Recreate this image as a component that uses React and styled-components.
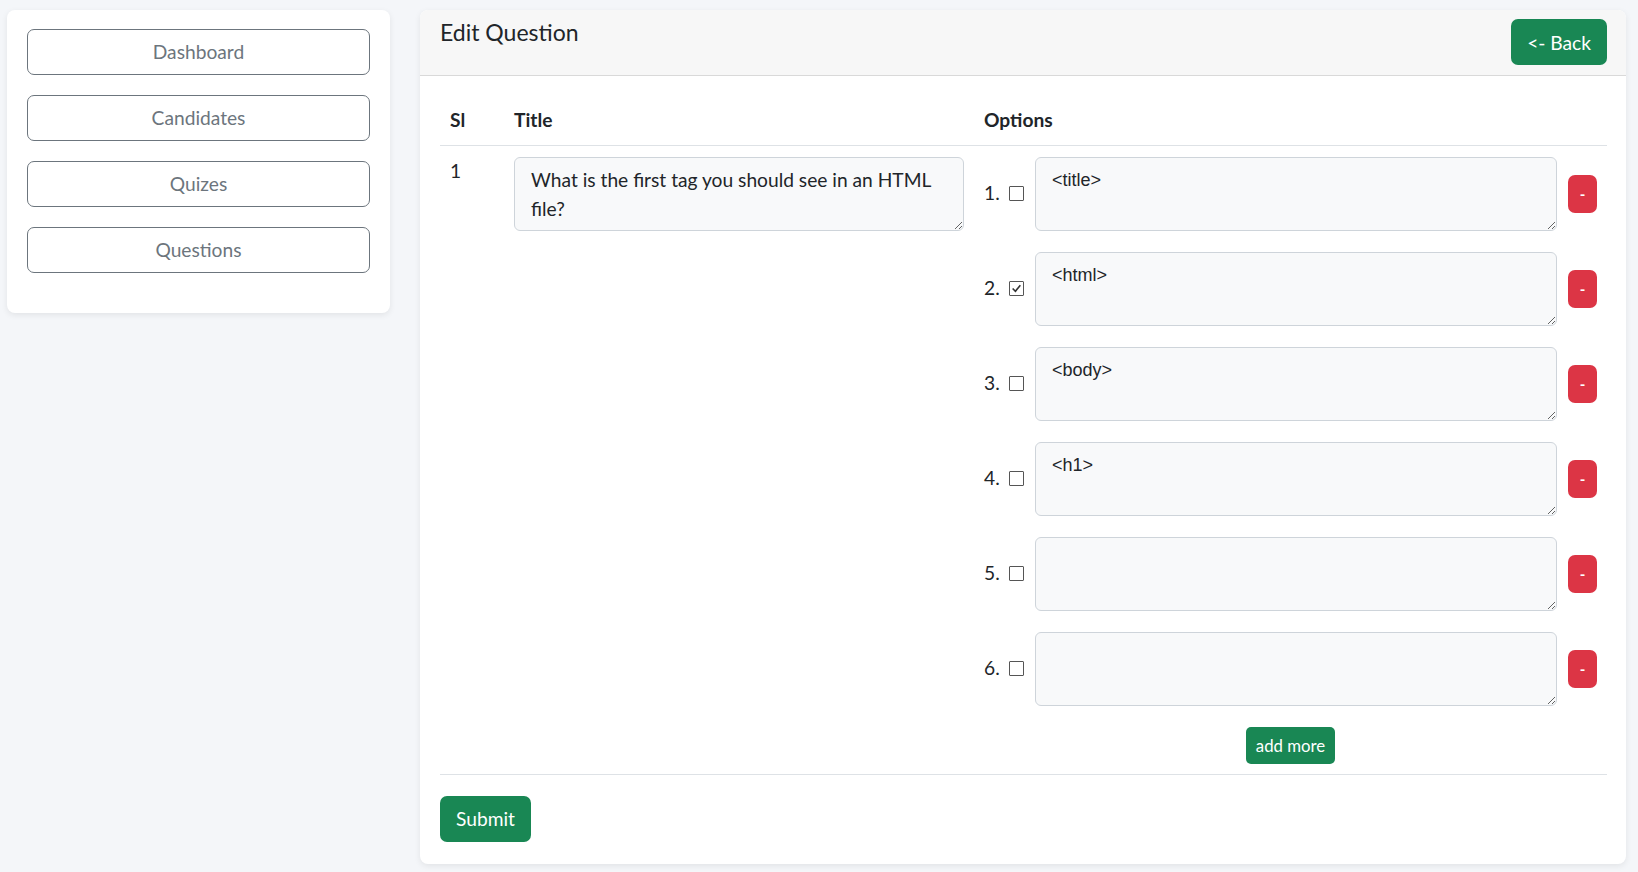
import React from "react";
import styled, { createGlobalStyle } from "styled-components";

const Global = createGlobalStyle`
  html, body { margin: 0; padding: 0; }
  body {
    background: #f4f6f9;
    font-family: Lato, "Noto Sans", sans-serif;
    font-size: 19.2px;
    color: #212529;
  }
  * { box-sizing: border-box; }
`;

const Page = styled.div`
  display: flex;
  align-items: flex-start;
  gap: 30px;
  padding: 10px 12px 9px 7px;
`;

const Sidebar = styled.nav`
  width: 383px;
  flex: none;
  background: #fff;
  border-radius: 8px;
  box-shadow: 0 2px 6px rgba(0, 0, 0, 0.08);
  padding: 19px 20px 40px;
  display: flex;
  flex-direction: column;
  gap: 20px;
`;

const NavButton = styled.button`
  height: 46px;
  background: #fff;
  border: 1px solid #6c757d;
  border-radius: 7px;
  color: #6c757d;
  font-family: inherit;
  font-size: 19.2px;
  padding: 0 0 2px;
  cursor: pointer;
`;

const Card = styled.main`
  flex: 1;
  background: #fff;
  border-radius: 8px;
  box-shadow: 0 2px 6px rgba(0, 0, 0, 0.08);
  overflow: hidden;
`;

const CardHeader = styled.header`
  height: 66px;
  background: #f7f7f7;
  border-bottom: 1px solid #d9d9d9;
  padding: 9px 19px 0 20px;
  display: flex;
  justify-content: space-between;
  align-items: flex-start;
`;

const Heading = styled.h5`
  margin: 0;
  font-size: 23px;
  font-weight: 400;
  line-height: 1.2;
  padding-top: 0;
`;

const Button = styled.button`
  background: ${(p) => (p.$variant === "danger" ? "#dc3545" : "#198754")};
  color: #fff;
  border: none;
  border-radius: ${(p) => (p.$small ? "5px" : "7px")};
  font-family: inherit;
  font-size: ${(p) => (p.$small ? "16.8px" : "19.2px")};
  height: ${(p) => (p.$small ? "37px" : "46px")};
  padding: 0 ${(p) => (p.$small ? "10px" : "16px")};
  cursor: pointer;
`;

const RemoveButton = styled(Button)`
  width: 29px;
  height: 38px;
  padding: 0;
  font-size: 15px;
  font-weight: 700;
  flex: none;
`;

const CardBody = styled.div`
  padding: 20px 19px 22px 20px;
`;

const Table = styled.div`
  display: grid;
  grid-template-columns: 64px 470px 1fr;
`;

const HeadCell = styled.div`
  padding: 10px 10px 10px;
  font-weight: 700;
  line-height: 28.8px;
  border-bottom: 1px solid #dee2e6;
`;

const Cell = styled.div`
  padding: 11px 10px 10px;
  line-height: 28.8px;
  border-bottom: 1px solid #dee2e6;
`;

const TextArea = styled.textarea`
  display: block;
  width: 100%;
  height: 74px;
  resize: vertical;
  background: #f8f9fa;
  border: 1px solid #ced4da;
  border-radius: 6px;
  padding: 8px 16px 6px;
  color: #212529;
  font-family: ${(p) => (p.$plain ? '"Liberation Sans", Arial, sans-serif' : "inherit")};
  font-size: ${(p) => (p.$plain ? "18px" : "19.2px")};
  line-height: 28.8px;
  outline: none;
`;

const OptionList = styled.div`
  display: flex;
  flex-direction: column;
  gap: 21px;
`;

const OptionRow = styled.div`
  display: flex;
  align-items: center;
`;

const OptionLabel = styled.span`
  width: 25px;
  flex: none;
`;

const Check = styled.span`
  width: 15px;
  height: 15px;
  flex: none;
  border: 1px solid #555;
  border-radius: 1px;
  background: #fff;
  display: flex;
  align-items: center;
  justify-content: center;
  margin-right: 11px;
`;

const OptionField = styled.div`
  flex: 1;
  margin-right: 11px;
`;

const AddRow = styled.div`
  display: flex;
  justify-content: center;
  padding-top: 21px;
`;

const Footer = styled.div`
  padding-top: 21px;
`;

const options = [
  { text: "<title>", checked: false },
  { text: "<html>", checked: true },
  { text: "<body>", checked: false },
  { text: "<h1>", checked: false },
  { text: "", checked: false },
  { text: "", checked: false },
];

export default function App() {
  return (
    <>
      <Global />
      <Page>
        <Sidebar>
          {["Dashboard", "Candidates", "Quizes", "Questions"].map((n) => (
            <NavButton key={n}>{n}</NavButton>
          ))}
        </Sidebar>
        <Card>
          <CardHeader>
            <Heading>Edit Question</Heading>
            <Button>&lt;- Back</Button>
          </CardHeader>
          <CardBody>
            <Table>
              <HeadCell>Sl</HeadCell>
              <HeadCell>Title</HeadCell>
              <HeadCell>Options</HeadCell>
              <Cell>1</Cell>
              <Cell>
                <TextArea defaultValue="What is the first tag you should see in an HTML file?" />
              </Cell>
              <Cell>
                <OptionList>
                  {options.map((o, i) => (
                    <OptionRow key={i}>
                      <OptionLabel>{i + 1}.</OptionLabel>
                      <Check>
                        {o.checked && (
                          <svg width="11" height="11" viewBox="0 0 10 10">
                            <path d="M1.5 5 L4 7.5 L8.5 2" fill="none" stroke="#333" strokeWidth="1.5" />
                          </svg>
                        )}
                      </Check>
                      <OptionField>
                        <TextArea $plain defaultValue={o.text} />
                      </OptionField>
                      <RemoveButton $variant="danger">-</RemoveButton>
                    </OptionRow>
                  ))}
                </OptionList>
                <AddRow>
                  <Button $small>add more</Button>
                </AddRow>
              </Cell>
            </Table>
            <Footer>
              <Button>Submit</Button>
            </Footer>
          </CardBody>
        </Card>
      </Page>
    </>
  );
}
